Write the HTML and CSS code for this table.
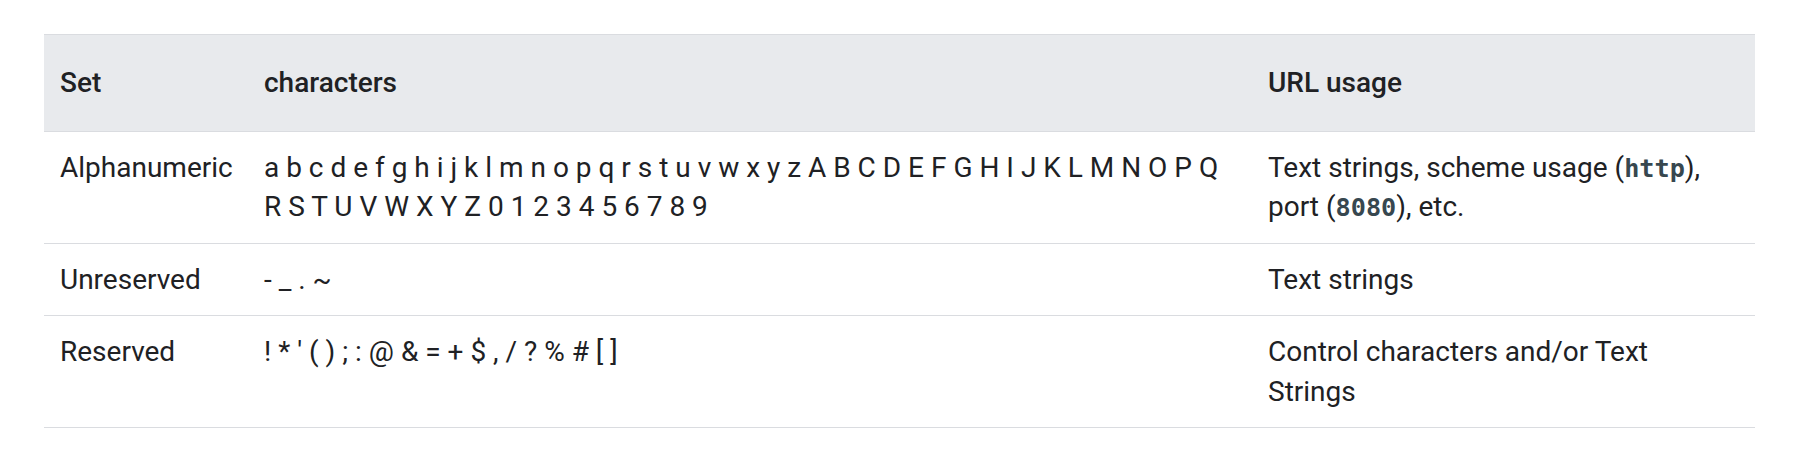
FILE: index.html
```html
<!DOCTYPE html>
<html lang="en">
<head>
<meta charset="utf-8">
<title>URL characters</title>
<link rel="stylesheet" href="styles.css">
</head>
<body>
<div class="page">
  <table class="chars-table">
    <colgroup>
      <col class="col-set">
      <col class="col-chars">
      <col class="col-usage">
    </colgroup>
    <thead>
      <tr>
        <th>Set</th>
        <th>characters</th>
        <th>URL usage</th>
      </tr>
    </thead>
    <tbody>
      <tr>
        <td>Alphanumeric</td>
        <td>a b c d e f g h i j k l m n o p q r s t u v w x y z A B C D E F G H I J K L M N O P Q R S T U V W X Y Z 0 1 2 3 4 5 6 7 8 9</td>
        <td>Text strings, scheme usage (<code>http</code>), port (<code>8080</code>), etc.</td>
      </tr>
      <tr>
        <td>Unreserved</td>
        <td>- _ . ~</td>
        <td>Text strings</td>
      </tr>
      <tr>
        <td>Reserved</td>
        <td>! * ' ( ) ; : @ &amp; = + $ , / ? % # [ ]</td>
        <td>Control characters and/or Text Strings</td>
      </tr>
    </tbody>
  </table>
</div>
</body>
</html>
```

FILE: styles.css
```css
html, body {
  margin: 0;
  padding: 0;
  background: #ffffff;
}

body {
  font-family: Roboto, "Noto Sans", "Liberation Sans", sans-serif;
  font-size: 28px;
  line-height: 39.5px;
  color: #202124;
}

.page {
  padding: 34px 41px 0 44px;
}

.chars-table {
  width: 1711px;
  border-collapse: collapse;
  table-layout: fixed;
}

.col-set { width: 204px; }
.col-chars { width: 1004px; }
.col-usage { width: 503px; }

.chars-table th {
  background: #e8eaed;
  font-weight: 500;
  text-align: left;
  padding: 28px 16px 28px;
  border-top: 1px solid #dadce0;
  border-bottom: 1px solid #dadce0;
  vertical-align: middle;
}

.chars-table td {
  padding: 16px 16px;
  border-bottom: 1px solid #dadce0;
  vertical-align: top;
  text-align: left;
}

.chars-table code {
  font-family: "DejaVu Sans Mono", "Liberation Mono", monospace;
  font-size: 0.9em;
  line-height: 1;
  font-weight: 700;
  color: #37474f;
}
```
